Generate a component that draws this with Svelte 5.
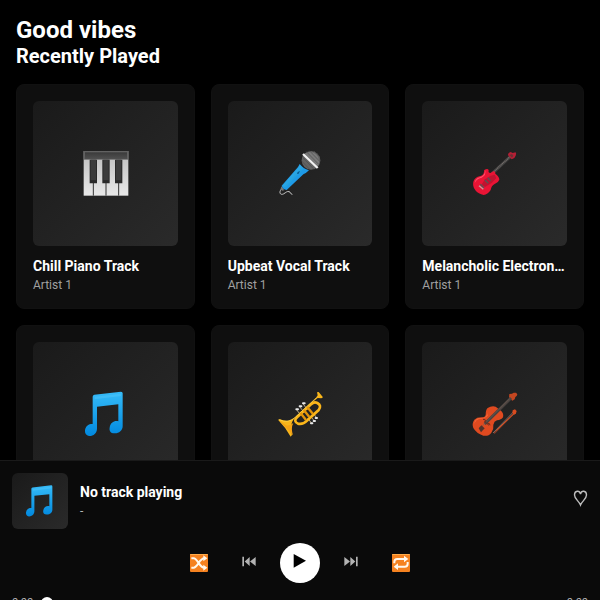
<script>
  const tracks = [
    { title: 'Chill Piano Track', artist: 'Artist 1', icon: 'piano' },
    { title: 'Upbeat Vocal Track', artist: 'Artist 1', icon: 'mic' },
    { title: 'Melancholic Electronic Track', artist: 'Artist 1', icon: 'guitar' },
    { title: 'Evening Melody', artist: 'Artist 1', icon: 'note' },
    { title: 'Brass Morning', artist: 'Artist 1', icon: 'trumpet' },
    { title: 'String Quartet', artist: 'Artist 1', icon: 'violin' }
  ];
  const boxes = {
    piano: '43 40 180 180',
    mic: '45 40 180 180',
    guitar: '44 40 180 180',
    note: '43 42 180 180',
    trumpet: '45 42 180 180',
    violin: '45 42 180 180'
  };
  let position = $state(0);
</script>

{#snippet picture(name)}
  <svg viewBox={boxes[name]} aria-hidden="true">
    {#if name === 'piano'}
      <defs>
        <linearGradient id="keys" x2="0" y2="1"><stop stop-color="#bdbdbd" /><stop offset="1" stop-color="#e8e8e8" /></linearGradient>
        <linearGradient id="lid" x2="0" y2="1"><stop stop-color="#3a3a3a" /><stop offset="1" stop-color="#505050" /></linearGradient>
      </defs>
      <rect x="69" y="64" width="134" height="134" fill="url(#keys)" />
      <rect x="69" y="64" width="134" height="26" fill="#626262" />
      <rect x="73" y="68" width="126" height="20" fill="url(#lid)" />
      <path d="M98 160V198M136 160V198M174 160V198" stroke="#333" stroke-width="3" />
      <path d="M87 90h22v71H87zM125 90h22v71h-22zM163 90h22v71h-22z" fill="#292929" />
      <path d="M90 90h16v62H90zM128 90h16v62h-16zM166 90h16v62h-16z" fill="#3b3b3b" />
    {:else if name === 'mic'}
      <defs>
        <linearGradient id="handle" x2="1" y2="1"><stop stop-color="#4fc3f7" /><stop offset="1" stop-color="#0288d1" /></linearGradient>
      </defs>
      <path d="M82 176c-12 8-8 22 3 17 9-5 11-9 17-7 6 1 3 7 9 8" fill="none" stroke="#c9c9c9" stroke-width="3" stroke-linecap="round" />
      <path d="M79 170l9 12-7 1-4-6z" fill="#777" />
      <path d="M134 103Q145 117 162 122Q153 131 145 134L95 181Q83 179 80 168L129 112Z" fill="#1e9be8" />
      <path d="M134 105l12 12L93 173q-8-1-10-5l49-57z" fill="url(#handle)" />
      <path d="M128 127l7-3-4 8-5 1z" fill="#075a91" />
      <circle cx="168" cy="92" r="28" fill="#626262" />
      <path d="M149 72a28 28 0 0 1 40 37z" fill="#7a7a7a" />
      <path d="M153 65l38 39M163 63l32 33M177 64l17 17M143 83l34 36M140 94l24 25" stroke="#4b4b4b" stroke-width="2" />
      <path d="M144 73l44 42" stroke="#f1f1f1" stroke-width="7" />
    {:else if name === 'guitar'}
      <path d="M125 132L181 80" stroke="#414141" stroke-width="9" />
      <path d="M126 130L179 81" stroke="#77706c" stroke-width="4" stroke-dasharray="3 2" />
      <path d="M173 74q2-6 8-7l6 3 9-2q3 4 0 10l-4 7-8 4-10-11z" fill="#b51f35" />
      <path d="M177 76l8-3 4 5-4 6z" fill="#6b3035" />
      <path d="M103 120Q113 115 115 122Q113 130 120 130L129 125Q136 124 135 132Q147 141 147 150Q144 159 133 163Q123 168 121 181Q112 195 100 196Q84 193 75 182Q66 170 69 156Q73 144 87 140Q100 137 101 126Q100 122 103 120Z" fill="#e91435" />
      <path d="M105 121Q108 137 94 144Q77 148 73 161Q74 147 88 143Q103 139 105 121Z" fill="#ff536c" />
      <path d="M121 138l12-3 5 10-13 14-21 13-11-6 11-17z" fill="#bf1430" />
      <path d="M90 164l11 11M104 151l10 10M112 144l9 9" stroke="#555" stroke-width="4" />
      <path d="M86 168l13 11" stroke="#cf9c9c" stroke-width="4" />
    {:else if name === 'note'}
      <defs>
        <linearGradient id="blue" x2="0" y2="1"><stop stop-color="#35bbf8" /><stop offset="1" stop-color="#0189df" /></linearGradient>
      </defs>
      <path d="M96 80Q96 75 101 74L181 65Q186 65 186 70V169C186 182 174 191 161 190C150 190 145 182 147 173C149 158 161 151 173 154V103L109 110V176C109 190 97 199 85 198C76 197 72 190 73 181C75 166 87 161 96 162Z" fill="url(#blue)" />
      <path d="M102 80L181 71V78L102 88Z" fill="#58c9fa" opacity=".4" />
    {:else if name === 'trumpet'}
      <path d="M124 118l12 16M134 110l14 18M144 101l13 18M159 145l10 14M167 139l11 14M175 131l10 12" stroke="#b9a782" stroke-width="3" />
      <path d="M124 118h5M134 109h5M144 100h5M168 160h4M176 153h4M182 144h4" stroke="#e8e8e8" stroke-width="6" stroke-linecap="round" />
      <path d="M69 149l6-1q27 12 48-9l58-53 7-10-2-9 5-1 13 16-5 3-11-1-15 12-57 52q-13 16-5 47l-4 5q-15-28-38-51z" fill="#f9b61b" />
      <path d="M74 153l40 43q-7-22 1-37-12 10-22 7z" fill="#f5a316" />
      <path d="M126 142L168 103Q177 94 187 99Q201 107 191 120L157 151Q143 165 129 161Q114 154 126 142Z" fill="none" stroke="#fbb61a" stroke-width="8" />
      <path d="M135 127l18 23M146 119l17 22M156 110l18 22" stroke="#e49509" stroke-width="7" />
      <path d="M72 149q27 13 49-7l62-58" fill="none" stroke="#ffda54" stroke-width="2" />
    {:else}
      <path d="M193 129L132 190" stroke="#813a26" stroke-width="5" />
      <path d="M190 126L129 189" stroke="#a38e83" stroke-width="2" />
      <path d="M188 121l7-3 5 5-2 7-5 4-6-6z" fill="#d94b1f" />
      <path d="M193 130L139 181" stroke="#e05424" stroke-width="3" />
      <path d="M178 72l8-1 5-3 7 0 4 5-2 5-4 3-2 7-7 4-10-9z" fill="#c44620" />
      <path d="M113 114Q124 107 137 110L153 122Q162 130 159 142Q154 150 141 151Q132 154 130 164Q132 177 124 188Q115 200 100 197Q79 190 70 174Q65 160 73 149Q80 142 94 142Q105 143 107 134Q107 119 113 114Z" fill="#df4a20" />
      <path d="M116 118Q109 126 113 137Q104 146 89 146Q76 149 73 162Q73 146 92 144Q109 145 111 132Q112 122 116 118Z" fill="#fb7141" />
      <path d="M104 162L183 84" stroke="#494240" stroke-width="9" />
      <path d="M91 174L180 85" stroke="#756055" stroke-width="2" />
      <path d="M86 175l8-9 10 9-11 12z" fill="#50332b" />
      <path d="M99 148q9-1 8 7M120 166q0-8-8-6M103 154l14 12" fill="none" stroke="#6d2e1d" stroke-width="3" />
    {/if}
  </svg>
{/snippet}

<div class="app">
  <main>
    <h1>Good vibes</h1>
    <h2>Recently Played</h2>
    <div class="grid">
      {#each tracks as track}
        <article class="card">
          <div class="cover">{@render picture(track.icon)}</div>
          <h3>{track.title}</h3>
          <p>{track.artist}</p>
        </article>
      {/each}
    </div>
  </main>

  <footer class="player">
    <div class="now">
      <div class="thumb">{@render picture('note')}</div>
      <div class="info">
        <strong>No track playing</strong>
        <span>-</span>
      </div>
      <button class="like" aria-label="Like">
        <svg width="16" height="24" viewBox="0 0 16 24" fill="none" stroke="#bdbdbd" stroke-width="1.4"><path d="M8.500 16C7 12 2.500 10 2.500 6C2.500 1.500 7.500 1 8.500 5C9.500 1 14.500 1.500 14.500 6C14.500 10 10 12 8.500 16Z" /></svg>
      </button>
    </div>

    <div class="controls">
      <button aria-label="Shuffle">
        <svg width="20" height="20" viewBox="0 0 60 60">
          <rect x="3" y="3" width="54" height="54" rx="3" fill="#f58220" />
          <path d="M3 6q0-3 3-3h48q3 0 3 3z" fill="#ffac4b" />
          <path d="M7 16h7c12 0 17 28 32 28M7 44h7c12 0 17-28 32-28" fill="none" stroke="#fff8ed" stroke-width="6" />
          <path d="M43 7l12 9-12 9zM43 35l12 9-12 9z" fill="#fff8ed" />
        </svg>
      </button>
      <button aria-label="Previous">
        <svg width="14" height="14" viewBox="0 0 42 42" fill="#b3b3b3"><path d="M1 2h5v29H1zM23 3v27L8 16.500zM41 3v27L24 16.500z" /></svg>
      </button>
      <button class="play" aria-label="Play">
        <svg width="14" height="20" viewBox="0 0 42 60"><path d="M2 3L39 23L2 44Z" fill="#000" /></svg>
      </button>
      <button aria-label="Next">
        <svg width="14" height="14" viewBox="0 0 42 42" fill="#b3b3b3"><path d="M36 2h5v29h-5zM19 3v27l15-13.500zM1 3v27l17-13.500z" /></svg>
      </button>
      <button aria-label="Repeat">
        <svg width="20" height="20" viewBox="0 0 60 60">
          <rect x="3" y="3" width="54" height="54" rx="3" fill="#f58220" />
          <path d="M3 6q0-3 3-3h48q3 0 3 3z" fill="#ffac4b" />
          <path d="M10 31v-4q0-9 9-9h23M50 27v5q0 9-9 9H19" fill="none" stroke="#fff8ed" stroke-width="6" />
          <path d="M39 8l13 10-13 10zM21 31L8 41l13 10z" fill="#fff8ed" />
        </svg>
      </button>
    </div>

    <div class="progress">
      <span>0:00</span>
      <input type="range" min="0" max="100" bind:value={position} aria-label="Track position" />
      <span>0:00</span>
    </div>
  </footer>
</div>

<style>
  :global(body) {
    margin: 0;
    background: #000;
  }
  .app {
    display: flex;
    flex-direction: column;
    height: 100vh;
    color: #fff;
    background: #000;
    font-family: Roboto, sans-serif;
  }
  main {
    flex: 1;
    min-height: 0;
    padding: 16px;
    overflow-y: auto;
    scrollbar-width: none;
  }
  h1, h2, h3, p {
    margin: 0;
  }
  h1 {
    font-size: 24px;
    line-height: 28px;
    font-weight: 700;
  }
  h2 {
    margin-bottom: 16px;
    font-size: 20px;
    line-height: 24px;
    font-weight: 700;
  }
  .grid {
    display: grid;
    grid-template-columns: repeat(3, minmax(0, 1fr));
    gap: 16px;
  }
  .card {
    padding: 16px;
    border: 1px solid #111;
    border-radius: 8px;
    background: #0f0f0f;
  }
  .cover, .thumb {
    display: flex;
    align-items: center;
    justify-content: center;
    background: linear-gradient(135deg, #1a1a1a, #2a2a2a);
  }
  .cover {
    aspect-ratio: 1;
    margin-bottom: 12px;
    border-radius: 6px;
  }
  .cover svg {
    width: 60px;
    height: 60px;
  }
  h3 {
    margin-bottom: 4px;
    overflow: hidden;
    font-size: 14px;
    line-height: 16px;
    font-weight: 700;
    text-overflow: ellipsis;
    white-space: nowrap;
  }
  p {
    color: #a0a0a0;
    font-size: 12px;
    line-height: 14px;
  }
  .player {
    box-sizing: border-box;
    height: 140px;
    padding: 12px;
    overflow: hidden;
    border-top: 1px solid #1a1a1a;
    background: #0a0a0a;
  }
  .now {
    display: flex;
    align-items: center;
    gap: 12px;
    margin-bottom: 14px;
  }
  .thumb {
    width: 56px;
    height: 56px;
    border-radius: 6px;
  }
  .thumb svg {
    width: 42px;
    height: 42px;
  }
  .info {
    display: flex;
    flex: 1;
    flex-direction: column;
    gap: 4px;
  }
  strong {
    font-size: 14px;
    line-height: 16px;
    font-weight: 700;
  }
  .info span {
    color: #b3b3b3;
    font-size: 12px;
    line-height: 14px;
  }
  button {
    display: flex;
    align-items: center;
    justify-content: center;
    width: 38px;
    height: 38px;
    padding: 0;
    border: 0;
    background: none;
    cursor: pointer;
  }
  .like {
    width: 16px;
  }
  .controls {
    display: flex;
    align-items: center;
    justify-content: center;
    gap: 12px;
    margin-bottom: 12px;
  }
  .play {
    width: 40px;
    height: 40px;
    border-radius: 50%;
    background: #fff;
  }
  .progress {
    display: flex;
    align-items: center;
    gap: 8px;
    color: #b3b3b3;
    font-size: 11px;
    line-height: 16px;
  }
  input {
    flex: 1;
    min-width: 0;
    height: 4px;
    margin: 0;
    border-radius: 2px;
    background: #2a2a2a;
    appearance: none;
  }
  input::-webkit-slider-thumb {
    width: 12px;
    height: 12px;
    border-radius: 50%;
    background: #fff;
    appearance: none;
  }
</style>
